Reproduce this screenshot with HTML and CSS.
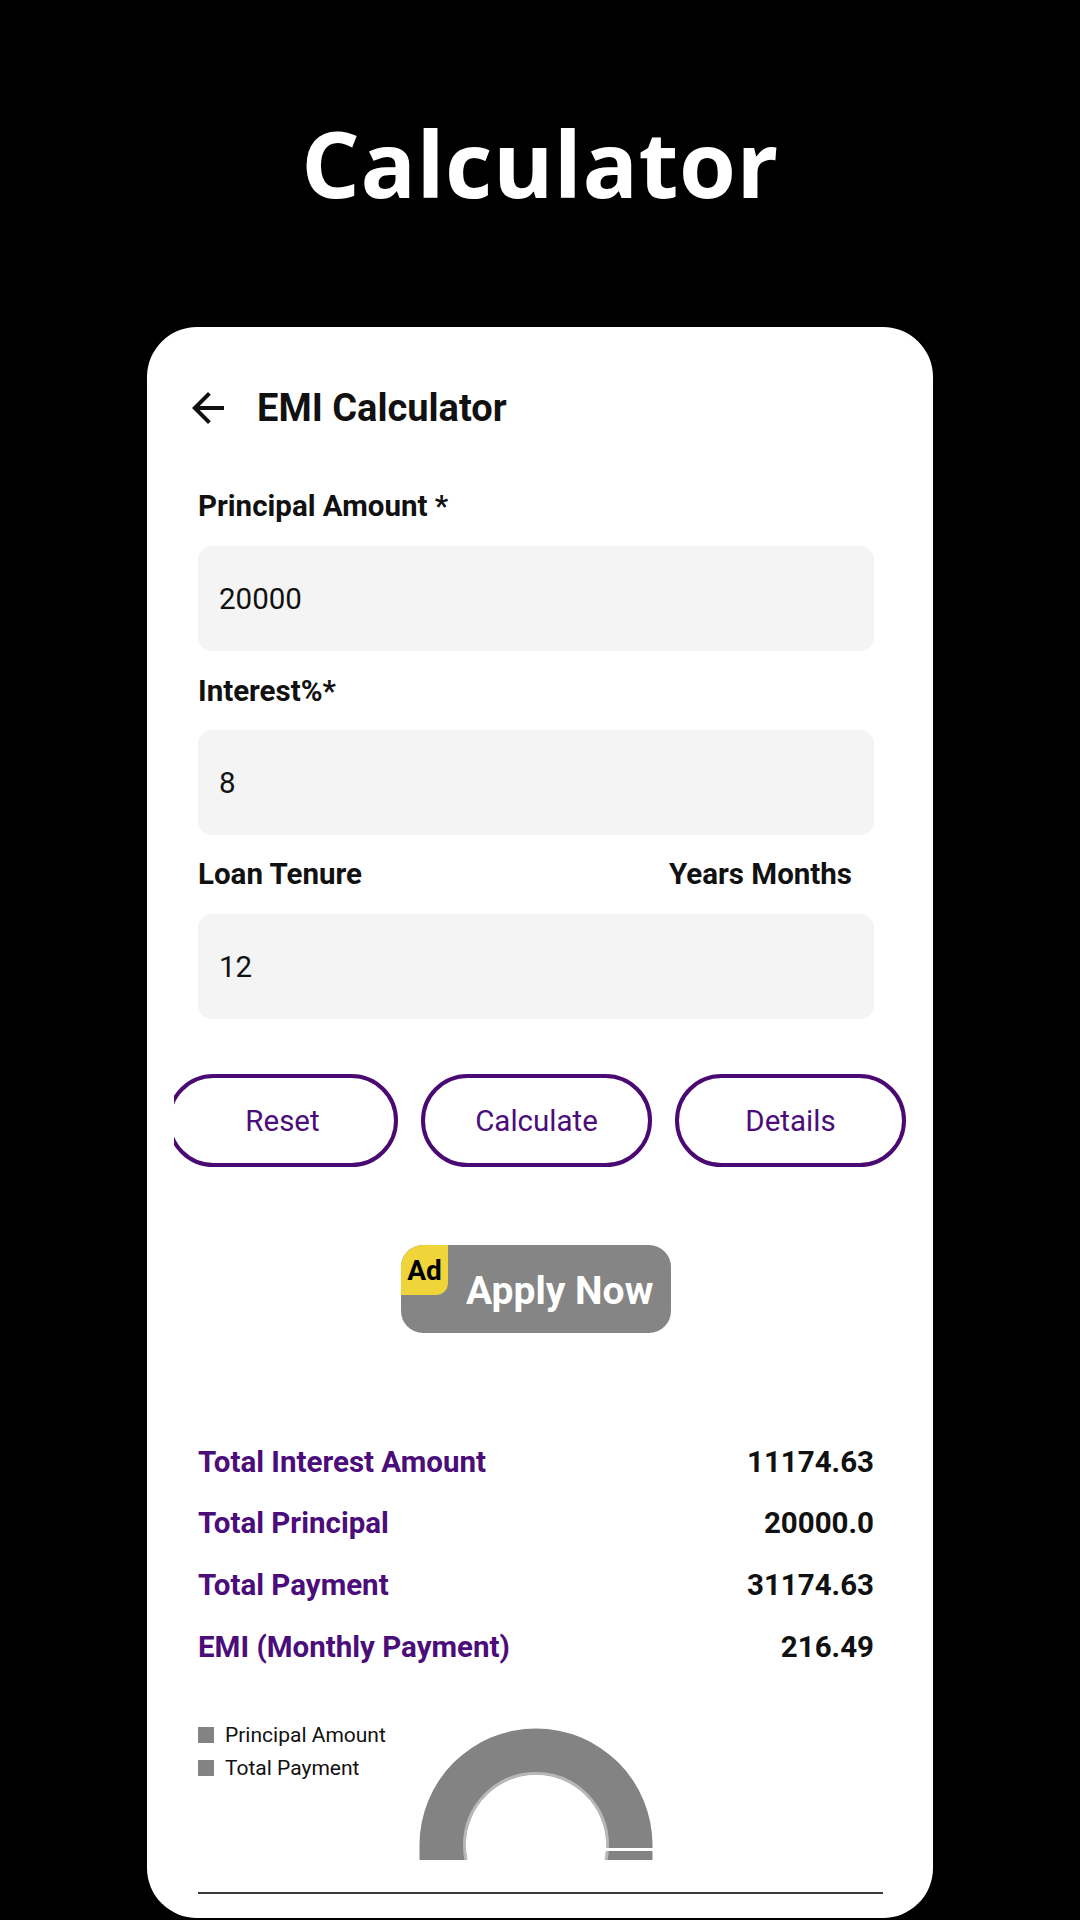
FILE: index.html
```html
<!DOCTYPE html>
<html>
<head>
<meta charset="utf-8">
<link rel="stylesheet" href="styles.css">
</head>
<body>
<div class="page">
  <h1 class="title">Calculator</h1>
  <div class="card">
    <div class="header">
      <svg class="back" viewBox="0 0 24 24" width="48" height="48"><path d="M20 11H7.83l5.59-5.59L12 4l-8 8 8 8 1.41-1.41L7.83 13H20v-2z" fill="#111"/></svg>
      <span class="header-title">EMI Calculator</span>
    </div>

    <div class="label">Principal Amount *</div>
    <div class="input">20000</div>

    <div class="label label-2">Interest%*</div>
    <div class="input input-2">8</div>

    <div class="label label-row"><span>Loan Tenure</span><span class="units">Years Months</span></div>
    <div class="input input-3">12</div>

    <div class="buttons-clip">
      <div class="buttons">
        <div class="btn">Reset</div>
        <div class="btn">Calculate</div>
        <div class="btn">Details</div>
      </div>
    </div>

    <div class="ad">
      <div class="ad-badge">Ad</div>
      <div class="ad-text">Apply Now</div>
    </div>

    <div class="results">
      <div class="row"><span class="row-label">Total Interest Amount</span><span class="row-value">11174.63</span></div>
      <div class="row"><span class="row-label">Total Principal</span><span class="row-value">20000.0</span></div>
      <div class="row"><span class="row-label">Total Payment</span><span class="row-value">31174.63</span></div>
      <div class="row"><span class="row-label">EMI (Monthly Payment)</span><span class="row-value">216.49</span></div>
    </div>

    <div class="chart-area">
      <div class="legend">
        <div class="legend-item"><span class="swatch"></span>Principal Amount</div>
        <div class="legend-item"><span class="swatch"></span>Total Payment</div>
      </div>
      <svg class="chart" width="240" height="141" viewBox="0 0 240 141">
        <path d="M3.5 126 A116.5 116.5 0 0 1 236.5 126 L236.5 141 L3.5 141 Z M50 126 A70 70 0 0 0 190 126 A70 70 0 0 0 50 126 Z" fill="#838383" fill-rule="evenodd"/>
        <circle cx="120" cy="126" r="71.5" fill="none" stroke="#b8b8b8" stroke-width="3"/>
        <circle cx="120" cy="126" r="70" fill="#fff"/>
        <rect x="186" y="129" width="54" height="3" fill="#fff"/>
      </svg>
    </div>

    <div class="divider"></div>
  </div>
</div>
</body>
</html>
```

FILE: styles.css
```css
html, body {
  margin: 0;
  padding: 0;
  background: #000;
}

.page {
  width: 1080px;
  height: 1920px;
  padding-top: 117px;
  box-sizing: border-box;
  overflow: hidden;
}

.title {
  margin: 0 0 118px 0;
  height: 92px;
  line-height: 92px;
  font-family: "Open Sans", sans-serif;
  font-weight: 700;
  font-size: 92px;
  letter-spacing: 0.5px;
  color: #fff;
  text-align: center;
}

.card {
  margin-left: 147px;
  width: 786px;
  height: 1591px;
  background: #fff;
  border-radius: 50px;
  overflow: hidden;
  box-sizing: border-box;
  padding: 57px 59px 0 51px;
  font-family: Roboto, "Noto Sans", sans-serif;
  color: #111;
}

.header {
  display: flex;
  align-items: center;
  height: 48px;
  margin-bottom: 57px;
}

.back {
  display: block;
  margin-left: -14px;
  margin-right: 25px;
}

.header-title {
  font-size: 38px;
  font-weight: 700;
  color: #111;
}

.label {
  font-size: 29.5px;
  font-weight: 700;
  line-height: 34px;
  height: 34px;
  margin-bottom: 23px;
}

.label-2 {
  margin-bottom: 22px;
}

.label-row {
  display: flex;
  justify-content: space-between;
  margin-bottom: 23px;
}

.units {
  margin-right: 22px;
}

.input {
  height: 105px;
  background: #f4f4f4;
  border-radius: 14px;
  display: flex;
  align-items: center;
  padding-left: 21px;
  font-size: 29.5px;
  color: #111;
  margin-bottom: 23px;
}

.input-2 {
  margin-bottom: 22px;
}

.input-3 {
  margin-bottom: 55px;
}

.buttons-clip {
  margin-left: -24px;
  margin-right: -59px;
  overflow: hidden;
  margin-bottom: 78px;
}

.buttons {
  display: flex;
  gap: 23px;
  margin-left: -7px;
}

.btn {
  flex: 0 0 231px;
  height: 93px;
  box-sizing: border-box;
  border: 4px solid #4a0a72;
  border-radius: 47px;
  display: flex;
  align-items: center;
  justify-content: center;
  font-size: 29.5px;
  color: #4b0d79;
}

.ad {
  width: 270px;
  height: 88px;
  margin: 0 auto 98px auto;
  background: #858585;
  border-radius: 22px;
  overflow: hidden;
  display: flex;
}

.ad-badge {
  width: 47px;
  height: 50px;
  background: #efd43a;
  border-bottom-right-radius: 12px;
  font-size: 28px;
  font-weight: 700;
  color: #000;
  display: flex;
  align-items: center;
  justify-content: center;
}

.ad-text {
  margin-left: 18px;
  align-self: center;
  padding-top: 4px;
  font-size: 39px;
  font-weight: 700;
  color: #fff;
}

.results {
  margin-bottom: 41px;
}

.row {
  height: 61.67px;
  display: flex;
  align-items: center;
  justify-content: space-between;
  font-size: 29.5px;
  font-weight: 700;
}

.row-label {
  color: #4b0d79;
}

.row-value {
  color: #111;
}

.chart-area {
  position: relative;
  height: 141px;
}

.legend {
  position: absolute;
  left: 0;
  top: 0;
}

.legend-item {
  display: flex;
  align-items: center;
  height: 33px;
  font-size: 21px;
  color: #111;
}

.swatch {
  width: 16px;
  height: 16px;
  background: #838383;
  margin-right: 11px;
}

.chart {
  display: block;
  margin: 0 auto;
}

.divider {
  margin-top: 32px;
  margin-right: -9px;
  height: 2px;
  background: #3a3a3a;
}
```
